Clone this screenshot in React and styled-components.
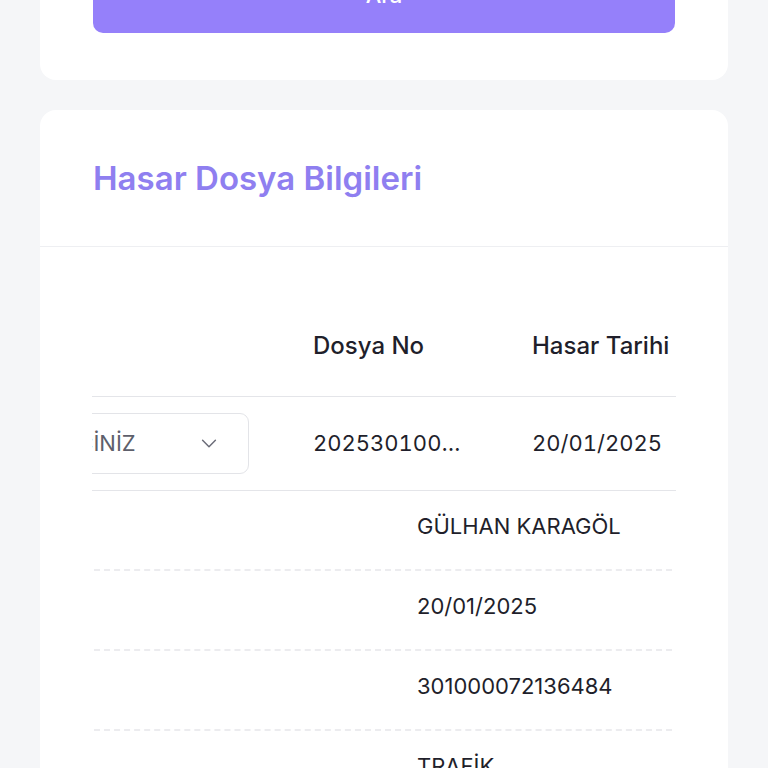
import { useLayoutEffect, useRef } from 'react'
import styled, { createGlobalStyle } from 'styled-components'

const GlobalStyle = createGlobalStyle`
  html, body {
    margin: 0;
    padding: 0;
    background: #f5f6f8;
    font-family: Inter, "Open Sans", "Liberation Sans", sans-serif;
    color: #1f1f2b;
  }
  * { box-sizing: border-box; }
`

const Page = styled.div`
  display: flex;
  flex-direction: column;
  gap: 30px;
  padding: 0 40px 40px;
  margin-top: -37px;
`

const Card = styled.section`
  background: #fff;
  border-radius: 16px;
  overflow: hidden;
`

const SearchBody = styled.div`
  padding: 0 53px 47px 53px;
`

const SearchButton = styled.button`
  display: block;
  width: 100%;
  height: 70px;
  border: none;
  border-radius: 10px;
  background: #9580fa;
  color: #fff;
  font-family: inherit;
  font-size: 22px;
  font-weight: 500;
  line-height: 30px;
  padding: 0 0 7px;
  cursor: pointer;
`

const CardHeader = styled.header`
  padding: 50px 53px;
  border-bottom: 1px solid #eeeff2;
`

const CardTitle = styled.h2`
  margin: 0;
  font-size: 33px;
  line-height: 36px;
  font-weight: 600;
  color: #8f7ff0;
`

const CardBody = styled.div`
  padding: 49px 52px 40px;
`

const Scroller = styled.div`
  overflow-x: auto;
  scrollbar-width: none;
  &::-webkit-scrollbar { display: none; }
`

const Table = styled.table`
  width: 1140px;
  table-layout: fixed;
  border-collapse: collapse;
`

const Th = styled.th`
  width: ${(p) => p.$w}px;
  padding: 0 16px;
  height: 100px;
  text-align: left;
  font-size: 24px;
  font-weight: 500;
  color: #1f1f2b;
  white-space: nowrap;
`

const Tr = styled.tr`
  border-top: 1px solid #e4e5e9;
`

const Td = styled.td`
  padding: 16px;
  height: 93px;
  font-size: 22px;
  color: #1f1f2b;
  white-space: nowrap;
  vertical-align: middle;
  font-variant-numeric: tabular-nums;
`

const Clip = styled.span`
  display: block;
  max-width: ${(p) => p.$max}px;
  overflow: hidden;
  text-overflow: ellipsis;
`

const Select = styled.div`
  display: flex;
  align-items: center;
  justify-content: space-between;
  width: 220px;
  height: 61px;
  padding: 0 28px 0 20px;
  border: 1px solid #e3e4e8;
  border-radius: 9px;
  font-size: 22px;
  color: #5e5f6b;
`

const Check = styled.span`
  display: inline-block;
  width: 22px;
  height: 22px;
  border: 1px solid #d5d6dc;
  border-radius: 5px;
`

const DetailCell = styled.td`
  padding: 0;
`

const DetailList = styled.ul`
  list-style: none;
  margin: 0;
  padding: 0;
`

const DetailItem = styled.li`
  display: grid;
  grid-template-columns: 588px 1fr;
  padding: 22px 0 30px 16px;
  line-height: 26px;
  font-size: 22px;
  border-bottom: 2px dashed #ececef;
`

const DetailLabel = styled.span`
  font-weight: 600;
  color: #1f1f2b;
`

const DetailValue = styled.span`
  color: #1f1f2b;
`

const Chevron = () => (
  <svg width="22" height="22" viewBox="0 0 24 24" fill="none" stroke="#6b6c78" strokeWidth="1.6" strokeLinecap="round" strokeLinejoin="round">
    <path d="M5 9l7 7 7-7" />
  </svg>
)

const details = [
  ['Sigortalı', 'GÜLHAN KARAGÖL'],
  ['İhbar Tarihi', '20/01/2025'],
  ['Poliçe No', '301000072136484'],
  ['Branş', 'TRAFİK'],
  ['Durum', 'AÇIK'],
]

export default function App() {
  const scrollRef = useRef(null)

  useLayoutEffect(() => {
    if (scrollRef.current) scrollRef.current.scrollLeft = 279
  }, [])

  return (
    <>
      <GlobalStyle />
      <Page>
        <Card>
          <SearchBody>
            <SearchButton>Ara</SearchButton>
          </SearchBody>
        </Card>

        <Card>
          <CardHeader>
            <CardTitle>Hasar Dosya Bilgileri</CardTitle>
          </CardHeader>
          <CardBody>
            <Scroller ref={scrollRef}>
              <Table>
                <thead>
                  <tr>
                    <Th $w={200}>Seç</Th>
                    <Th $w={284}></Th>
                    <Th $w={219}>Dosya No</Th>
                    <Th $w={219}>Hasar Tarihi</Th>
                    <Th $w={218}>Plaka</Th>
                  </tr>
                </thead>
                <tbody>
                  <Tr>
                    <Td><Check /></Td>
                    <Td>
                      <Select>
                        <span>SEÇİNİZ</span>
                        <Chevron />
                      </Select>
                    </Td>
                    <Td><Clip $max={150}>2025301000418</Clip></Td>
                    <Td>20/01/2025</Td>
                    <Td>34 ABC 123</Td>
                  </Tr>
                  <Tr>
                    <DetailCell colSpan={5}>
                      <DetailList>
                        {details.map(([label, value]) => (
                          <DetailItem key={label}>
                            <DetailLabel>{label}</DetailLabel>
                            <DetailValue>{value}</DetailValue>
                          </DetailItem>
                        ))}
                      </DetailList>
                    </DetailCell>
                  </Tr>
                </tbody>
              </Table>
            </Scroller>
          </CardBody>
        </Card>
      </Page>
    </>
  )
}
